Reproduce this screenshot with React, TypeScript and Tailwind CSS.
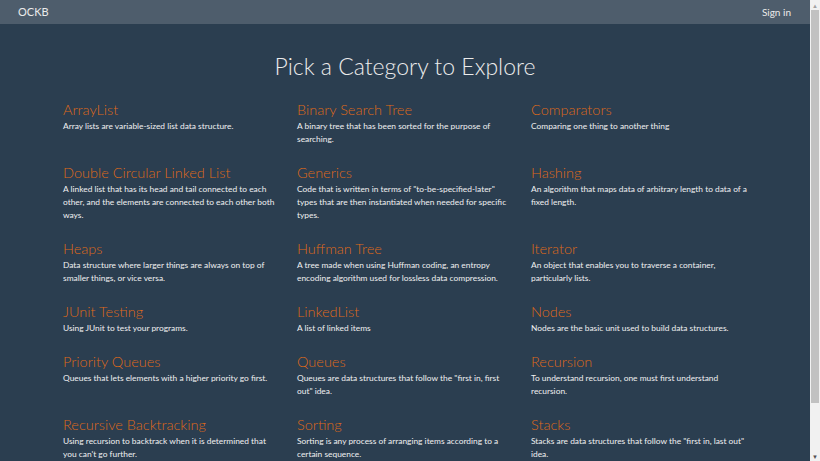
import React from "react";

const categories = [
  { name: "ArrayList", desc: "Array lists are variable-sized list data structure." },
  { name: "Binary Search Tree", desc: "A binary tree that has been sorted for the purpose of searching." },
  { name: "Comparators", desc: "Comparing one thing to another thing" },
  {
    name: "Double Circular Linked List",
    desc: "A linked list that has its head and tail connected to each other, and the elements are connected to each other both ways.",
  },
  {
    name: "Generics",
    desc: "Code that is written in terms of \"to-be-specified-later\" types that are then instantiated when needed for specific types.",
  },
  { name: "Hashing", desc: "An algorithm that maps data of arbitrary length to data of a fixed length." },
  { name: "Heaps", desc: "Data structure where larger things are always on top of smaller things, or vice versa." },
  {
    name: "Huffman Tree",
    desc: "A tree made when using Huffman coding, an entropy encoding algorithm used for lossless data compression.",
  },
  { name: "Iterator", desc: "An object that enables you to traverse a container, particularly lists." },
  { name: "JUnit Testing", desc: "Using JUnit to test your programs." },
  { name: "LinkedList", desc: "A list of linked items" },
  { name: "Nodes", desc: "Nodes are the basic unit used to build data structures." },
  { name: "Priority Queues", desc: "Queues that lets elements with a higher priority go first." },
  { name: "Queues", desc: "Queues are data structures that follow the \"first in, first out\" idea." },
  { name: "Recursion", desc: "To understand recursion, one must first understand recursion." },
  {
    name: "Recursive Backtracking",
    desc: "Using recursion to backtrack when it is determined that you can't go further.",
  },
  { name: "Sorting", desc: "Sorting is any process of arranging items according to a certain sequence." },
  { name: "Stacks", desc: "Stacks are data structures that follow the \"first in, last out\" idea." },
];

export default function App() {
  return (
    <div className="flex h-[461px] overflow-hidden bg-[#2b3e50] font-['Lato',sans-serif]">
      {/* PAGE */}
      <div className="flex-1 flex flex-col">
        {/* NAVBAR */}
        <div className="h-[24px] shrink-0 bg-[#4e5d6c] flex items-center justify-between pl-[18px] pr-[19px] text-[11px] text-[#ebebeb]">
          <span>OCKB</span>
          <span className="text-[10px]">Sign in</span>
        </div>

        <h1 className="mt-[27px] text-center text-[23px] leading-[30px] font-light text-[#ebebeb]">
          Pick a Category to Explore
        </h1>

        {/* CATEGORIES */}
        <div className="mt-[21px] pl-[63px] grid grid-cols-[218px_218px_218px] gap-x-[16px] gap-y-[19px]">
          {categories.map((c) => (
            <div key={c.name}>
              <h3 className="mb-[2px] text-[14.5px] leading-[16px] font-light text-[#df691a]">{c.name}</h3>
              <p className="text-[8.4px] leading-[13px] text-[#f0f0f0]">{c.desc}</p>
            </div>
          ))}
        </div>
      </div>

      {/* SCROLLBAR */}
      <div className="w-[10px] shrink-0 bg-[#f1f1f1] flex flex-col items-center">
        <div className="h-[10px] flex items-center justify-center text-[6px] text-[#a3a3a3]">▲</div>
        <div className="w-[8px] h-[393px] bg-[#c1c1c1]" />
        <div className="flex-1" />
        <div className="h-[10px] flex items-center justify-center text-[6px] text-[#505050]">▼</div>
      </div>
    </div>
  );
}
